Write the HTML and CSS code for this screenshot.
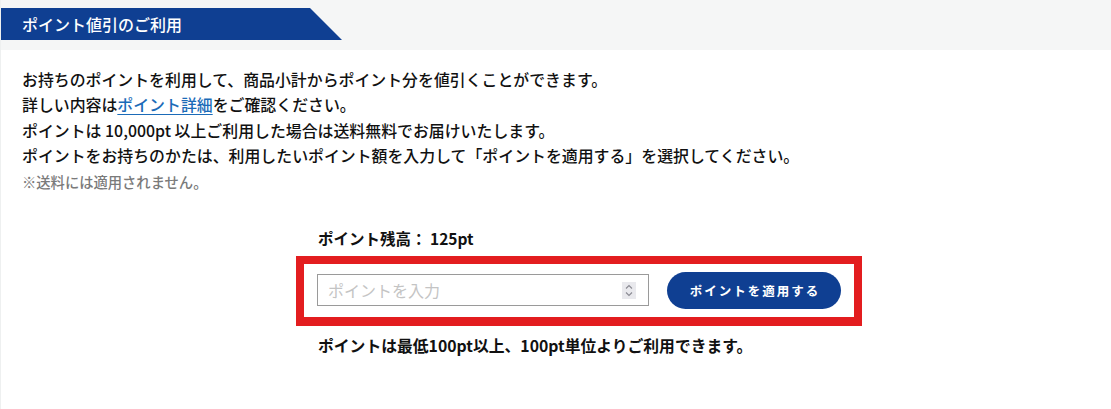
FILE: index.html
```html
<!DOCTYPE html>
<html lang="ja">
<head>
<meta charset="utf-8">
<title>ポイント値引のご利用</title>
<link rel="stylesheet" href="styles.css">
</head>
<body>
<section class="panel">
  <header class="panel-head">
    <h2 class="tab">ポイント値引のご利用</h2>
  </header>
  <div class="panel-body">
    <p class="lead">お持ちのポイントを利用して、商品小計からポイント分を値引くことができます。<br>詳しい内容は<a class="link" href="#">ポイント詳細</a>をご確認ください。<br>ポイントは 10,000pt 以上ご利用した場合は送料無料でお届けいたします。<br>ポイントをお持ちのかたは、利用したいポイント額を入力して「ポイントを適用する」を選択してください。</p>
    <p class="note">※送料には適用されません。</p>

    <div class="points">
      <p class="balance">ポイント残高： 125pt</p>
      <div class="form-box">
        <label class="field">
          <input class="field-input" type="text" placeholder="ポイントを入力">
          <span class="spinner">
            <svg width="8" height="13" viewBox="0 0 8 13"><path d="M1 4.5 L4 1.5 L7 4.5 M1 8.5 L4 11.5 L7 8.5" fill="none" stroke="#8a8a92" stroke-width="1.1"/></svg>
          </span>
        </label>
        <button class="apply" type="button">ポイントを適用する</button>
      </div>
      <p class="rule">ポイントは最低100pt以上、100pt単位よりご利用できます。</p>
    </div>
  </div>
</section>
</body>
</html>
```
FILE: styles.css
```css
* { box-sizing: border-box; }
html, body { margin: 0; padding: 0; background: #fff; }
body {
  font-family: "Noto Sans CJK JP", "Noto Sans", sans-serif;
  color: #111;
}
.panel {
  width: 1111px;
  min-height: 409px;
  border-left: 1px solid #eef0f0;
}
.panel-head {
  height: 50px;
  background: #f5f6f6;
  padding-top: 8px;
}
.tab {
  margin: 0;
  width: 341px;
  height: 32px;
  background: #0f3f92;
  color: #fff;
  font-size: 16px;
  font-weight: 500;
  line-height: 32px;
  padding-left: 21px;
  clip-path: polygon(0 0, 309px 0, 100% 100%, 0 100%);
}
.panel-body {
  padding: 17px 21px 0;
}
.lead {
  margin: 0;
  font-size: 15.9px;
  font-weight: 500;
  line-height: 25.4px;
}
.link {
  color: #1b6bb8;
  text-decoration: underline;
  text-underline-offset: 3px;
}
.note {
  margin: 0;
  font-size: 14.3px;
  font-weight: 500;
  line-height: 25px;
  color: #7a7a7a;
}
.points {
  margin-left: 274px;
  width: 566px;
  margin-top: 32px;
}
.balance {
  margin: 0 0 6px;
  padding-left: 22px;
  font-size: 15.5px;
  font-weight: 700;
  line-height: 24px;
}
.form-box {
  display: flex;
  align-items: center;
  gap: 18px;
  height: 70px;
  border: 8px solid #e31d1f;
  border-bottom-width: 9px;
  padding: 0 11px 0 13px;
}
.field {
  display: flex;
  align-items: center;
  width: 332px;
  height: 32px;
  border: 1px solid #9a9a9a;
  padding: 0 12px 0 10px;
  background: #fff;
}
.field-input {
  flex: 1;
  min-width: 0;
  border: 0;
  outline: none;
  padding: 0;
  font-family: inherit;
  font-size: 16px;
  color: #333;
  background: transparent;
}
.field-input::placeholder { color: #c4c4c4; }
.spinner {
  display: flex;
  align-items: center;
  justify-content: center;
  width: 14px;
  height: 17px;
  background: #e9e9ed;
}
.apply {
  width: 174px;
  height: 37px;
  border: 0;
  border-radius: 19px;
  background: #0f3f92;
  color: #fff;
  font-family: inherit;
  font-size: 12.5px;
  font-weight: 700;
  letter-spacing: 2px;
  padding: 0 0 0 2px;
  cursor: pointer;
}
.rule {
  margin: 8px 0 0;
  padding-left: 22px;
  font-size: 15.8px;
  font-weight: 700;
  line-height: 24px;
}
```
